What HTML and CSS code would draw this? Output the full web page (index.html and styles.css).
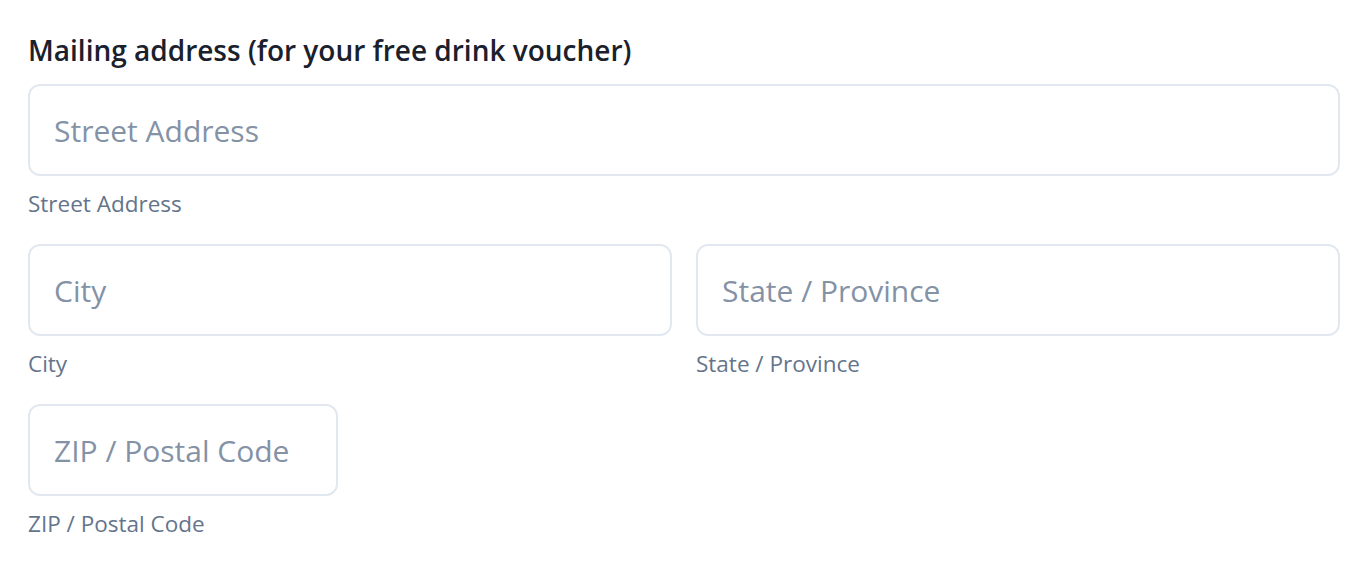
FILE: index.html
```html
<!DOCTYPE html>
<html lang="en">
<head>
<meta charset="utf-8">
<title>Mailing address</title>
<link rel="stylesheet" href="styles.css">
</head>
<body>
<form class="address-form">
  <h2 class="form-title">Mailing address (for your free drink voucher)</h2>
  <div class="field">
    <input class="text-input" type="text" placeholder="Street Address">
    <label class="field-label">Street Address</label>
  </div>
  <div class="row">
    <div class="field">
      <input class="text-input" type="text" placeholder="City">
      <label class="field-label">City</label>
    </div>
    <div class="field">
      <input class="text-input" type="text" placeholder="State / Province">
      <label class="field-label">State / Province</label>
    </div>
  </div>
  <div class="field field-zip">
    <input class="text-input" type="text" placeholder="ZIP / Postal Code">
    <label class="field-label">ZIP / Postal Code</label>
  </div>
</form>
</body>
</html>
```
FILE: styles.css
```css
html, body {
  margin: 0;
  padding: 0;
  background: #ffffff;
}
body {
  font-family: "Open Sans", "Noto Sans", "Liberation Sans", sans-serif;
}
.address-form {
  padding: 30px 28px 0 28px;
  display: flex;
  flex-direction: column;
}
.form-title {
  margin: 0 0 14px 0;
  font-size: 28px;
  line-height: 40px;
  font-weight: 600;
  color: #1a202c;
}
.field {
  display: flex;
  flex-direction: column;
  margin-bottom: 25px;
}
.row {
  display: grid;
  grid-template-columns: 1fr 1fr;
  column-gap: 24px;
}
.field-zip {
  width: 310px;
}
.text-input {
  box-sizing: border-box;
  width: 100%;
  height: 92px;
  border: 2px solid #e2e8f0;
  border-radius: 12px;
  padding: 0 24px;
  font-family: inherit;
  font-size: 30px;
  color: #1a202c;
  background: #ffffff;
  outline: none;
}
.text-input::placeholder {
  color: #8492a6;
  opacity: 1;
}
.field-label {
  margin-top: 13px;
  font-size: 22.5px;
  line-height: 30px;
  color: #64748b;
}
```
